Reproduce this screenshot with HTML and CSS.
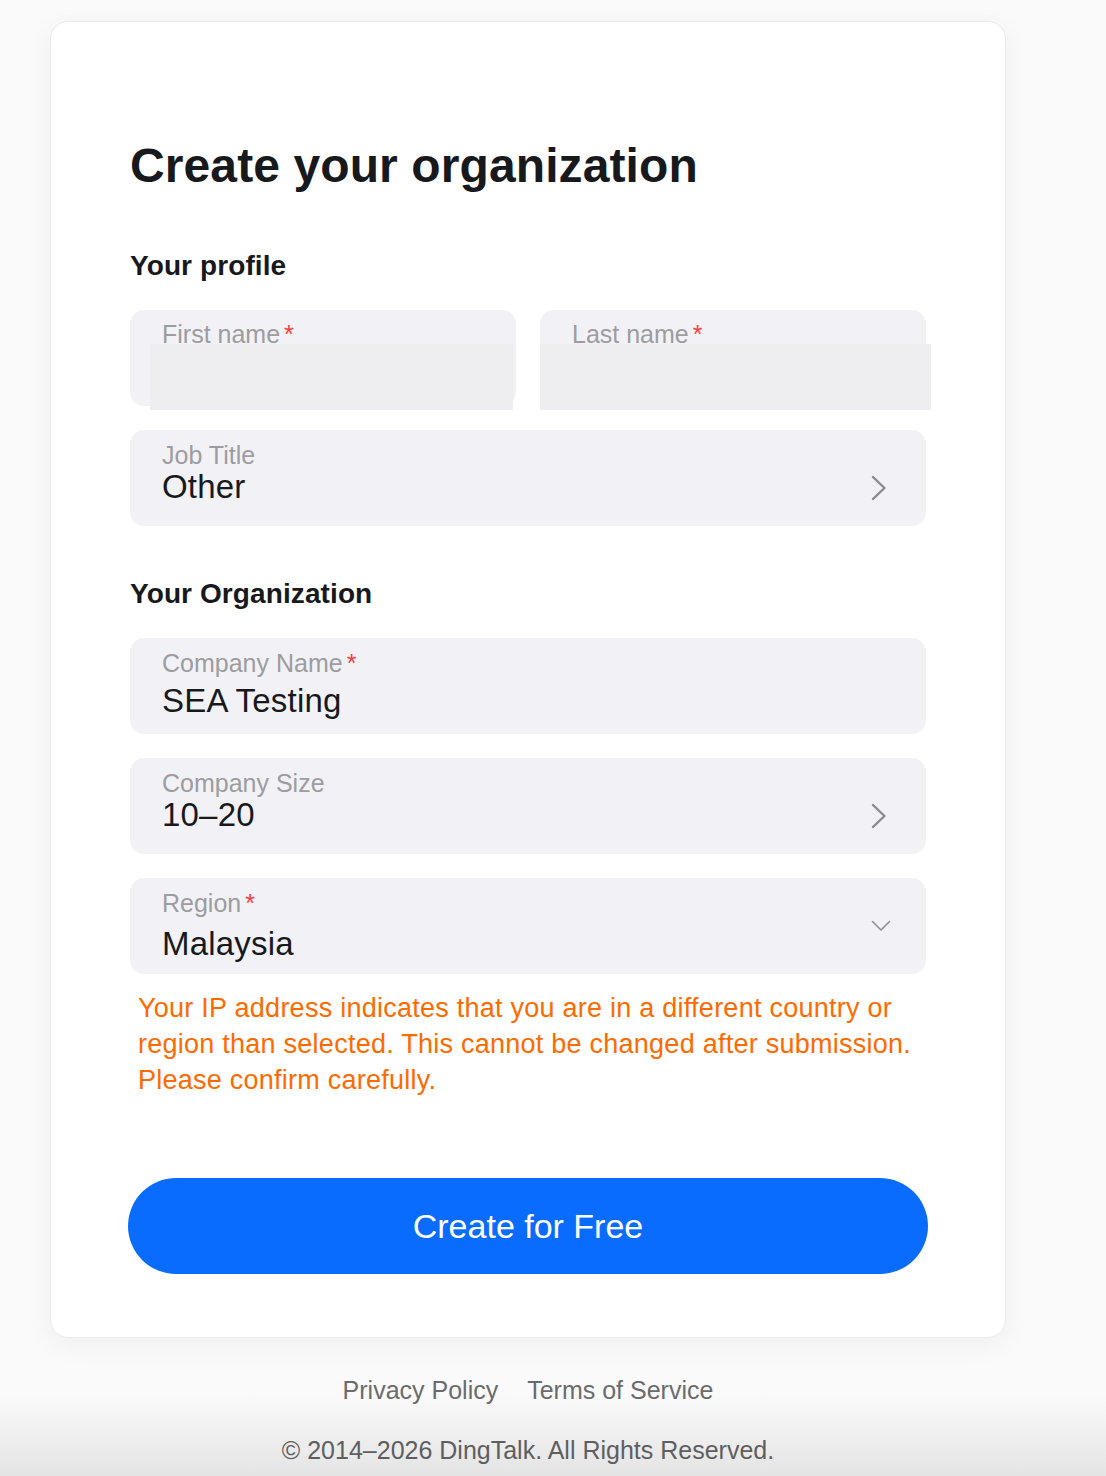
FILE: index.html
```html
<!DOCTYPE html>
<html lang="en">
<head>
<meta charset="utf-8">
<title>Create your organization</title>
<link rel="stylesheet" href="styles.css">
</head>
<body>
<div class="page">
  <main class="card">
    <h1 class="title">Create your organization</h1>

    <h2 class="section">Your profile</h2>
    <div class="row">
      <div class="field field-name">
        <div class="label">First name<span class="req">*</span></div>
        <div class="input input-first"></div>
      </div>
      <div class="field field-name">
        <div class="label">Last name<span class="req">*</span></div>
        <div class="input input-last"></div>
      </div>
    </div>
    <div class="field field-select">
      <div class="field-body">
        <div class="label">Job Title</div>
        <div class="value value-select">Other</div>
      </div>
      <svg class="chev-right" width="16" height="26" viewBox="0 0 16 26"><path d="M2 2 L13.5 13 L2 24" fill="none" stroke="#8a8a8e" stroke-width="2.4" stroke-linecap="round" stroke-linejoin="round"/></svg>
    </div>

    <h2 class="section section-org">Your Organization</h2>
    <div class="stack">
      <div class="field">
        <div class="field-body">
          <div class="label">Company Name<span class="req">*</span></div>
          <div class="value value-input">SEA Testing</div>
        </div>
      </div>
      <div class="field field-select">
        <div class="field-body">
          <div class="label">Company Size</div>
          <div class="value value-select">10–20</div>
        </div>
        <svg class="chev-right" width="16" height="26" viewBox="0 0 16 26"><path d="M2 2 L13.5 13 L2 24" fill="none" stroke="#8a8a8e" stroke-width="2.4" stroke-linecap="round" stroke-linejoin="round"/></svg>
      </div>
      <div class="field field-select">
        <div class="field-body">
          <div class="label">Region<span class="req">*</span></div>
          <div class="value value-region">Malaysia</div>
        </div>
        <svg class="chev-down" width="20" height="12" viewBox="0 0 20 12"><path d="M1.5 1.5 L10 10 L18.5 1.5" fill="none" stroke="#8e8e93" stroke-width="1.6" stroke-linecap="round" stroke-linejoin="round"/></svg>
      </div>
    </div>
    <p class="warning">Your IP address indicates that you are in a different country or region than selected. This cannot be changed after submission. Please confirm carefully.</p>

    <button class="submit" type="button">Create for Free</button>
  </main>

  <footer class="footer">
    <div class="links">
      <a class="link">Privacy Policy</a>
      <a class="link">Terms of Service</a>
    </div>
    <div class="copy">© 2014–2026 DingTalk. All Rights Reserved.</div>
  </footer>
</div>
</body>
</html>
```

FILE: styles.css
```css
* { box-sizing: border-box; }

html, body {
  margin: 0;
  padding: 0;
}

body {
  min-height: 1476px;
  font-family: "Liberation Sans", Arial, "Noto Sans", sans-serif;
  color: #1f2329;
  background: linear-gradient(to bottom, #fafafa 0, #fafafa 1395px, #e4e4e4 1476px);
}

.page {
  width: 956px;
  margin-left: 50px;
  padding-top: 21px;
}

.card {
  background: #ffffff;
  border: 1px solid #ebebeb;
  border-radius: 18px;
  box-shadow: 0 6px 28px rgba(0, 0, 0, 0.05);
  padding: 116px 79px 63px 79px;
}

.title {
  margin: 0;
  font-size: 48px;
  line-height: 56px;
  font-weight: 700;
  color: #17191c;
  letter-spacing: 0.1px;
}

.section {
  margin: 54px 0 26px;
  font-size: 28px;
  line-height: 36px;
  font-weight: 700;
  color: #17191c;
  letter-spacing: 0.1px;
}

.section-org {
  margin-top: 50px;
}

.row {
  display: grid;
  grid-template-columns: 1fr 1fr;
  gap: 24px;
  margin-bottom: 24px;
}

.stack {
  display: flex;
  flex-direction: column;
  gap: 24px;
}

.field {
  height: 96px;
  background: #f2f2f6;
  border-radius: 14px;
  padding: 11px 32px 0;
  display: flex;
  align-items: flex-start;
}

.field-name {
  display: block;
  padding-top: 10px;
}

.field-body {
  flex: 1;
}

.label {
  font-size: 25px;
  line-height: 28px;
  color: #9c9ca1;
  white-space: nowrap;
}

.req {
  color: #ff3b3b;
  margin-left: 4px;
}

.input {
  height: 66px;
  background: #eeeef0;
  margin-top: -4px;
}

.input-first {
  margin-left: -12px;
  margin-right: -29px;
}

.input-last {
  margin-left: -32px;
  margin-right: -37px;
}

.value {
  font-size: 33px;
  line-height: 36px;
  color: #17191c;
  letter-spacing: 0.2px;
}

.value-input {
  margin-top: 6px;
}

.value-region {
  margin-top: 9px;
}

.chev-right {
  margin-top: 34px;
  margin-right: 7px;
  flex: none;
}

.chev-down {
  margin-top: 31px;
  margin-right: 3px;
  flex: none;
}

.warning {
  margin: 16px 0 0;
  padding: 0 0 0 8px;
  font-size: 27px;
  line-height: 36px;
  letter-spacing: 0.25px;
  color: #ff6a00;
}

.submit {
  display: block;
  width: 800px;
  height: 96px;
  margin: 80px 0 0 -2px;
  border: none;
  border-radius: 48px;
  background: #0a6cff;
  color: #ffffff;
  font-family: "Liberation Sans", Arial, sans-serif;
  font-size: 34px;
  cursor: pointer;
}

.footer {
  text-align: center;
  padding-top: 36px;
}

.links {
  display: flex;
  justify-content: center;
  gap: 29px;
}

.link {
  font-size: 25px;
  line-height: 32px;
  color: #6b6b6e;
}

.copy {
  margin-top: 28px;
  font-size: 25px;
  line-height: 32px;
  color: #5e5e61;
}
```
